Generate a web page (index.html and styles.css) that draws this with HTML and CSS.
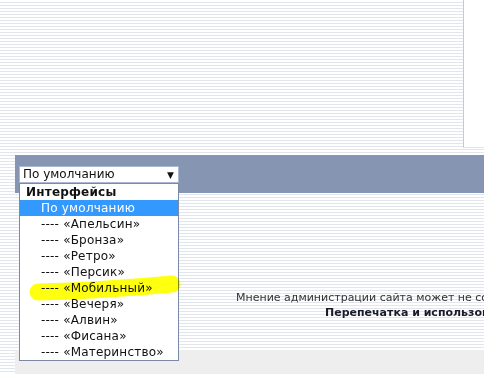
FILE: index.html
```html
<!DOCTYPE html>
<html lang="ru">
<head>
<meta charset="utf-8">
<link rel="stylesheet" href="styles.css">
</head>
<body>
<div class="page">
  <div class="top">
    <div class="side-panel"></div>
  </div>
  <div class="bar">
    <div class="select">
      <span class="select-value">По умолчанию</span>
      <span class="select-arrow">▼</span>
      <ul class="options">
        <li class="group">Интерфейсы</li>
        <li class="opt selected">По умолчанию</li>
        <li class="opt">---- «Апельсин»</li>
        <li class="opt">---- «Бронза»</li>
        <li class="opt">---- «Ретро»</li>
        <li class="opt">---- «Персик»</li>
        <li class="opt">---- «Мобильный»</li>
        <li class="opt">---- «Вечеря»</li>
        <li class="opt">---- «Алвин»</li>
        <li class="opt">---- «Фисана»</li>
        <li class="opt">---- «Материнство»</li>
      </ul>
      <svg class="marker" width="170" height="44" viewBox="0 0 170 44">
        <path d="M18 33 C 60 32, 110 29, 152 25" />
      </svg>
    </div>
  </div>
  <div class="copy">
    <p class="note">Мнение администрации сайта может не сов</p>
    <p class="note bold">Перепечатка и использов</p>
  </div>
  <div class="bottom"></div>
</div>
</body>
</html>
```

FILE: styles.css
```css
html, body {
  margin: 0;
  padding: 0;
}
body {
  width: 484px;
  height: 374px;
  overflow: hidden;
  background: repeating-linear-gradient(to bottom, #ffffff 0, #ffffff 2px, #e1e6ee 2px, #e1e6ee 3px);
  font-family: "DejaVu Sans", Tahoma, sans-serif;
}
.page {
  display: flex;
  flex-direction: column;
}
.top {
  height: 155px;
  display: flex;
  justify-content: flex-end;
  align-items: flex-start;
}
.side-panel {
  width: 20px;
  height: 147px;
  background: #ffffff;
  border-left: 1px solid #c9c9c9;
  border-bottom: 1px solid #e4e4e4;
}
.bar {
  margin-left: 15px;
  height: 38px;
  background: #8595b2;
  padding: 11px 0 0 4px;
  box-sizing: border-box;
}
.select {
  position: relative;
  width: 160px;
  height: 17px;
  box-sizing: border-box;
  background: #ffffff;
  border: 1px solid #a9b8d3;
  display: flex;
  align-items: center;
  justify-content: space-between;
  padding: 0 4px 0 3px;
  font-size: 12px;
  color: #111;
}
.select-value {
  line-height: 15px;
}
.select-arrow {
  font-size: 9px;
  color: #111;
}
.options {
  position: absolute;
  left: -1px;
  top: 16px;
  width: 160px;
  margin: 0;
  padding: 0;
  list-style: none;
  background: #ffffff;
  border: 1px solid #7a8aa6;
  box-sizing: border-box;
  z-index: 2;
}
.options li {
  height: 16px;
  line-height: 16px;
  font-size: 12px;
  letter-spacing: 0.2px;
  color: #111;
  white-space: nowrap;
}
.group {
  font-weight: bold;
  padding-left: 6px;
}
.opt {
  padding-left: 21px;
}
.opt.selected {
  background: #3399ff;
  color: #ffffff;
}
.marker {
  position: absolute;
  left: 0;
  top: 92px;
  z-index: 3;
  mix-blend-mode: multiply;
  pointer-events: none;
}
.marker path {
  fill: none;
  stroke: #ffff10;
  stroke-width: 17;
  stroke-linecap: round;
}
.copy {
  height: 157px;
  box-sizing: border-box;
  padding: 97px 0 0 236px;
  color: #333;
  font-size: 11px;
  overflow: hidden;
}
.note {
  margin: 0;
  line-height: 15px;
  white-space: nowrap;
}
.bold {
  font-weight: bold;
  color: #1a1a2a;
  padding-left: 89px;
}
.bottom {
  margin-left: 15px;
  height: 24px;
  background: #eeeeee;
}
```
